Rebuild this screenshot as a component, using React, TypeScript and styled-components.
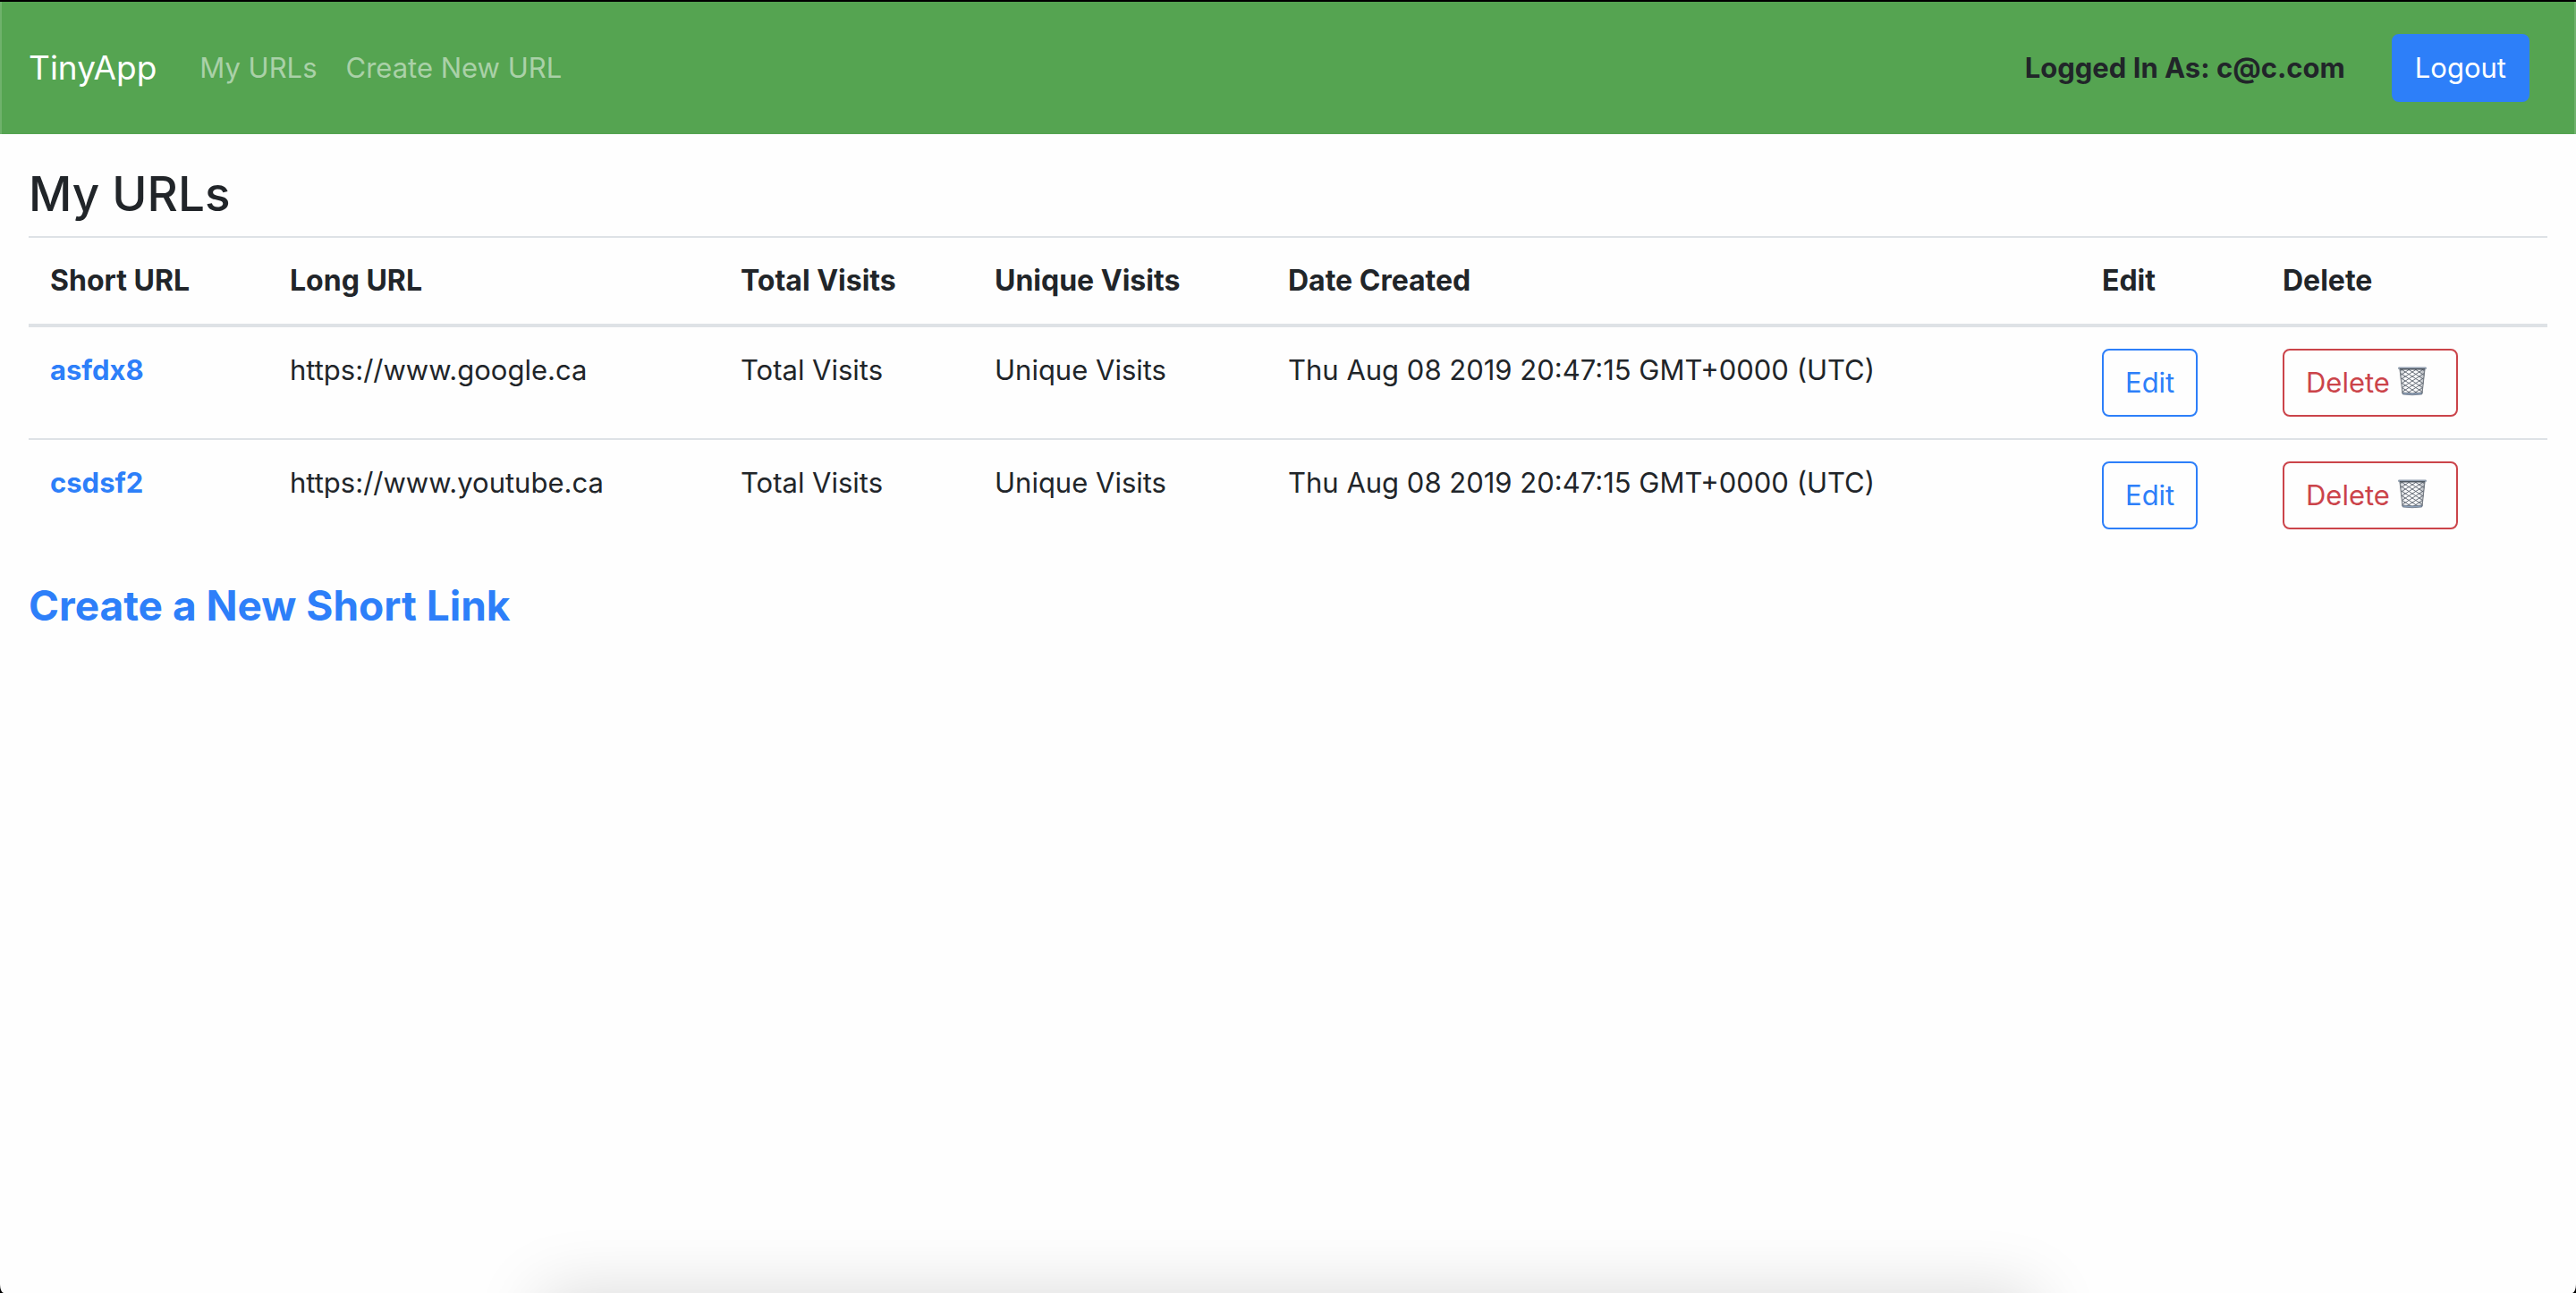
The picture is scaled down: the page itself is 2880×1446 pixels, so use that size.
import React from "react";
import styled, { createGlobalStyle, css } from "styled-components";

const GlobalStyle = createGlobalStyle`
  *, *::before, *::after { box-sizing: border-box; }
  body {
    margin: 0;
    background: #000;
    color: #212529;
    font-family: Inter, "Liberation Sans", sans-serif;
    font-size: 31px;
    line-height: 48px;
  }
`;

const Page = styled.div`
  min-height: 100vh;
  border-top: 2px solid #000;
  border-radius: 0 0 4px 4px / 0 0 10px 10px;
  background: #fefefe;
  background-clip: padding-box;
`;

const Navbar = styled.nav`
  display: flex;
  align-items: center;
  padding: 36px 50px 36px 30px;
  border: 0 solid #6fb26c;
  border-width: 0 2px;
  background: #55a451;
`;

const Brand = styled.a`
  margin-right: 32px;
  color: #fff;
  font-size: 37px;
  line-height: 60px;
  text-decoration: none;
`;

const NavList = styled.ul`
  display: flex;
  flex: 1;
  margin: 0;
  padding: 0;
  list-style: none;
`;

const NavLink = styled.a`
  display: block;
  padding: 0 16px;
  color: rgba(255, 255, 255, 0.5);
  text-decoration: none;
`;

const Session = styled.form`
  display: flex;
  align-items: center;
  gap: 52px;
`;

const SessionLabel = styled.span`
  font-weight: 700;
`;

const tones = {
  primary: css`
    border-color: #2d7ff9;
    background: #2d7ff9;
    color: #fff;
  `,
  outlinePrimary: css`
    border-color: #2d7ff9;
    color: #2d7ff9;
  `,
  outlineDanger: css`
    border-color: #cb444a;
    color: #cb444a;
  `,
};

const Button = styled.button<{ $tone: keyof typeof tones }>`
  display: flex;
  align-items: center;
  gap: 8px;
  padding: 12px 24px;
  border: 2px solid transparent;
  border-radius: 8px;
  background: transparent;
  font: inherit;
  white-space: nowrap;
  cursor: pointer;
  ${({ $tone }) => tones[$tone]}
`;

const Content = styled.main`
  padding: 32px;
`;

const Title = styled.h1`
  margin: 0 0 12px;
  font-size: 53px;
  font-weight: 500;
  line-height: 70px;
`;

const Table = styled.table`
  width: 100%;
  margin-bottom: 32px;
  border-spacing: 0;
  table-layout: fixed;
`;

const Column = styled.col<{ $width?: number }>`
  width: ${({ $width }) => ($width ? `${$width}px` : "auto")};
`;

const HeadCell = styled.th`
  padding: 24px;
  border-top: 2px solid #dee2e6;
  border-bottom: 4px solid #dee2e6;
  font-size: 32px;
  font-weight: 700;
  text-align: left;
`;

const Row = styled.tr`
  & + & > * {
    border-top: 2px solid #dee2e6;
  }
`;

const Cell = styled.td`
  padding: 24px;
  vertical-align: top;
`;

const ShortLink = styled.a`
  color: #2d7ff9;
  font-weight: 700;
  text-decoration: none;
`;

const CreateHeading = styled.h2`
  margin: 0;
  font-size: 46px;
  font-weight: 700;
  line-height: 58px;
`;

const CreateLink = styled.a`
  color: #2d7ff9;
  text-decoration: none;
`;

const BottomShade = styled.div`
  position: fixed;
  right: 21%;
  bottom: -200px;
  left: 21%;
  height: 200px;
  box-shadow: 0 0 76px rgba(0, 0, 0, 0.15);
  pointer-events: none;
`;

const TrashIcon = styled.svg`
  width: 34px;
  height: 34px;
  margin: 0 8px 4px 0;
`;

function Wastebasket() {
  return (
    <TrashIcon viewBox="0 0 34 34" fill="none" aria-hidden="true">
      <defs>
        <linearGradient id="basket-side" x1="0" x2="1">
          <stop offset="0" stopColor="#c3c7cc" />
          <stop offset="0.25" stopColor="#fdfdfe" />
          <stop offset="0.75" stopColor="#f8f9fa" />
          <stop offset="1" stopColor="#a4a9b0" />
        </linearGradient>
        <clipPath id="basket-shape">
          <path d="M3 4H31L28 32H6Z" />
        </clipPath>
      </defs>
      <path d="M3 4H31L28 32H6Z" fill="url(#basket-side)" />
      <g clipPath="url(#basket-shape)" stroke="#59616c" strokeWidth="0.9">
        <path d="M0 6L34 28M0 11L34 33M0 16L34 38M0 21L34 43M0 26L34 48M0 1L34 23M0 -4L34 18M0 -9L34 13M0 -14L34 8" />
        <path d="M34 6L0 28M34 11L0 33M34 16L0 38M34 21L0 43M34 26L0 48M34 1L0 23M34 -4L0 18M34 -9L0 13M34 -14L0 8" />
      </g>
      <path d="M3 4L6 31M31 4L28 31" stroke="#737981" />
      <path d="M6 30Q17 31.5 28 30L27.7 32Q17 33.5 6.3 32Z" fill="#8fa5c0" stroke="#5d6673" strokeWidth="0.7" />
      <rect x="1" y="1.4" width="32" height="2.8" rx="1.4" fill="#8e9bab" />
      <path d="M3 3.8H31" stroke="#414850" strokeWidth="1.2" />
      <path d="M3 1.6H31" stroke="#c4ccd6" strokeWidth="0.8" />
    </TrashIcon>
  );
}

const columns = [
  { label: "Short URL", width: 268 },
  { label: "Long URL", width: 504 },
  { label: "Total Visits", width: 284 },
  { label: "Unique Visits", width: 328 },
  { label: "Date Created" },
  { label: "Edit", width: 202 },
  { label: "Delete", width: 320 },
];

const urls = [
  { id: "asfdx8", longUrl: "https://www.google.ca" },
  { id: "csdsf2", longUrl: "https://www.youtube.ca" },
];

export default function App() {
  return (
    <>
      <GlobalStyle />
      <Page>
        <Navbar>
          <Brand href="#">TinyApp</Brand>
          <NavList>
            <li><NavLink href="#urls">My URLs</NavLink></li>
            <li><NavLink href="#new">Create New URL</NavLink></li>
          </NavList>
          <Session onSubmit={(event) => event.preventDefault()}>
            <SessionLabel>Logged In As: c@c.com</SessionLabel>
            <Button $tone="primary" type="submit">Logout</Button>
          </Session>
        </Navbar>
        <Content>
          <Title>My URLs</Title>
          <Table>
            <colgroup>
              {columns.map(({ label, width }) => <Column key={label} $width={width} />)}
            </colgroup>
            <thead>
              <tr>
                {columns.map(({ label }) => <HeadCell key={label} scope="col">{label}</HeadCell>)}
              </tr>
            </thead>
            <tbody>
              {urls.map(({ id, longUrl }) => (
                <Row key={id}>
                  <Cell><ShortLink href={`#${id}`}>{id}</ShortLink></Cell>
                  <Cell>{longUrl}</Cell>
                  <Cell>Total Visits</Cell>
                  <Cell>Unique Visits</Cell>
                  <Cell>Thu Aug 08 2019 20:47:15 GMT+0000 (UTC)</Cell>
                  <Cell><Button $tone="outlinePrimary" type="button">Edit</Button></Cell>
                  <Cell>
                    <Button $tone="outlineDanger" type="button">
                      Delete <Wastebasket />
                    </Button>
                  </Cell>
                </Row>
              ))}
            </tbody>
          </Table>
          <CreateHeading><CreateLink href="#new">Create a New Short Link</CreateLink></CreateHeading>
        </Content>
      </Page>
      <BottomShade />
    </>
  );
}
